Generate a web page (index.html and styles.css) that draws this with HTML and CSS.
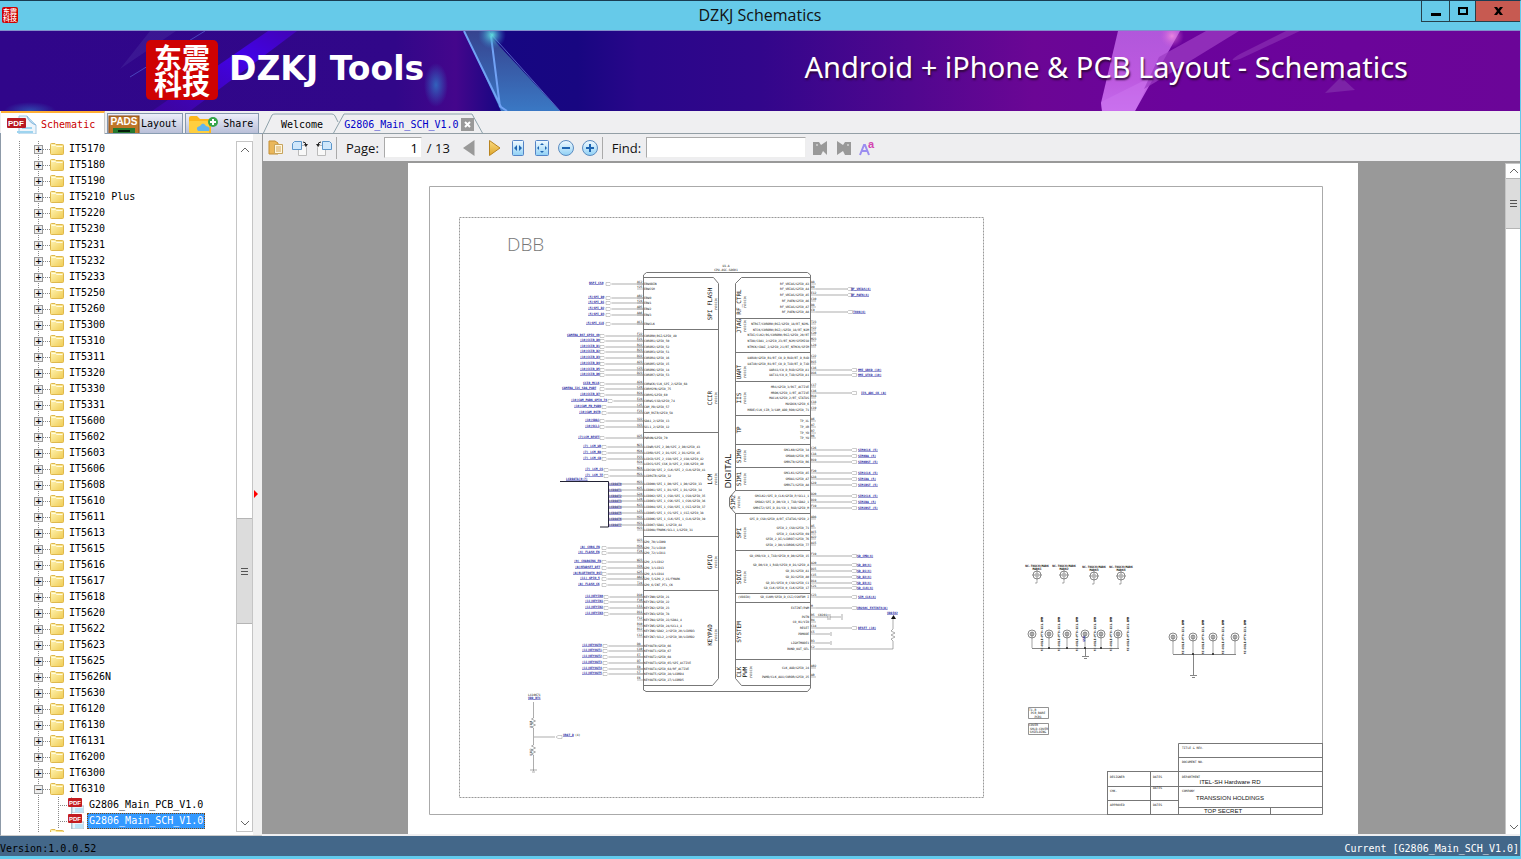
FILE: index.html
```html
<!DOCTYPE html>
<html lang="en">
<head>
<meta charset="utf-8">
<title>DZKJ Schematics</title>
<link rel="stylesheet" href="styles.css">
</head>
<body>
<svg class="defs" aria-hidden="true">
  <defs>
    <linearGradient id="folderFill" x1="0" y1="0" x2="1" y2="1"><stop offset="0" stop-color="#fff6b8"/><stop offset="1" stop-color="#f0cb52"/></linearGradient>
    <linearGradient id="blueFill" x1="0" y1="0" x2="0" y2="1"><stop offset="0" stop-color="#f2faff"/><stop offset="1" stop-color="#8fd0f5"/></linearGradient>
    <linearGradient id="goldFill" x1="0" y1="0" x2="0" y2="1"><stop offset="0" stop-color="#fbdc82"/><stop offset="1" stop-color="#dea52a"/></linearGradient>
    <symbol id="folder" viewBox="0 0 14 12"><path d="M.5 10.500V1.500q0-1 1-1H5l1 1h6.500q1 0 1 1v8q0 1-1 1h-11q-1 0-1-1z" fill="url(#folderFill)" stroke="#dfb84c"/><path d="M1.500 2.500h4l1 1h6" fill="none" stroke="#fffbe0"/></symbol>
    <symbol id="pdf" viewBox="0 0 16 16"><path d="M3.500 0v16M4 9h12v7H4z" fill="#e9f4fb" stroke="#a9bfca"/><path d="M7 12h8M7 14h8" stroke="#8ed3f3"/><rect x="0" y="1" width="14" height="9" rx="1" fill="#c31c20"/><text x="7" y="8" text-anchor="middle" class="badge-small">PDF</text></symbol>
  </defs>
</svg>

<div class="window">
  <header class="titlebar">
    <span class="app-icon"><span>东震</span><span>科技</span></span>
    <h1>DZKJ Schematics</h1>
    <div class="window-buttons">
      <button class="wb min" aria-label="Minimize"><svg width="12" height="10"><path d="M1 7h10v3H1z"/></svg></button>
      <button class="wb max" aria-label="Maximize"><svg width="10" height="8"><path d="M0 0h10v8H0zM2 2v4h6V2z" fill-rule="evenodd"/></svg></button>
      <button class="wb close" aria-label="Close"><svg width="9" height="8"><path d="M0 0h3l1.500 2L6 0h3L6 4l3 4H6L4.500 6 3 8H0l3-4z"/></svg></button>
    </div>
  </header>

  <section class="banner">
    <svg class="banner-art" viewBox="0 0 1520 80" preserveAspectRatio="none" aria-hidden="true">
      <defs>
        <linearGradient id="sky" x1="0" x2="1" y1="0" y2="0">
          <stop offset="0" stop-color="#30068a"/><stop offset=".26" stop-color="#310789"/><stop offset=".3" stop-color="#44068c"/><stop offset=".33" stop-color="#160682"/><stop offset=".38" stop-color="#180681"/><stop offset=".42" stop-color="#29068a"/><stop offset=".5" stop-color="#32068b"/><stop offset=".6" stop-color="#51078f"/><stop offset=".68" stop-color="#6b0695"/><stop offset=".78" stop-color="#6b039c"/><stop offset="1" stop-color="#6b0598"/>
        </linearGradient>
        <linearGradient id="shard" x1="0" x2="0" y1="0" y2="1"><stop offset="0" stop-color="#36438f"/><stop offset="1" stop-color="#3a78c4"/></linearGradient>
        <linearGradient id="pink" x1="0" x2="0" y1="0" y2="1"><stop offset="0" stop-color="#b157db"/><stop offset=".6" stop-color="#bd5ae0"/><stop offset="1" stop-color="#c66bed"/></linearGradient>
        <linearGradient id="beam" x1="1" x2="0" y1="0" y2="1"><stop offset="0" stop-color="#4203b4"/><stop offset=".35" stop-color="#4202e8"/><stop offset="1" stop-color="#4203a8" stop-opacity=".7"/></linearGradient>
        <radialGradient id="glow"><stop offset="0" stop-color="#2f78c8"/><stop offset="1" stop-color="#2f78c8" stop-opacity="0"/></radialGradient>
        <radialGradient id="spark"><stop offset="0" stop-color="#61e0df"/><stop offset="1" stop-color="#2f78c8" stop-opacity="0"/></radialGradient>
        <radialGradient id="rose"><stop offset="0" stop-color="#ff9be0"/><stop offset="1" stop-color="#d35ad8" stop-opacity="0"/></radialGradient>
      </defs>
      <rect width="1520" height="80" fill="url(#sky)"/>
      <path d="M268 0h29L190 80h-38z" fill="url(#beam)"/>
      <path d="M150 0h26L120 38zM205 0L128 50" fill="#4b2fa0" opacity=".4"/>
      <path d="M205 0l-75 46" stroke="#4a45bd"/>
      <ellipse cx="30" cy="80" rx="26" ry="9" fill="url(#glow)" opacity=".6"/>
      <ellipse cx="436" cy="54" rx="12" ry="22" fill="url(#glow)" opacity=".8"/>
      <path d="M464 0h26l1 6 69 74h-59z" fill="url(#shard)"/>
      <path d="M464 0l37 76 6 4M491 5l9 71" fill="none" stroke="#71a2f5" stroke-width="2"/>
      <path d="M490 2l70 78" fill="none" stroke="#5566c4"/>
      <circle cx="492" cy="4" r="14" fill="url(#spark)"/>
      <path d="M1118 0h62l-45 80h-33l-1-8z" fill="url(#pink)"/>
      <path d="M1101 71l50-25-16 34h-33z" fill="#ce78f0" opacity=".45"/>
      <path d="M1206 0h33l-75 46-20 12 15-32z" fill="#9c3cc3" opacity=".75"/>
      <path d="M1286 0h14l-60 28q-15 4 0-5z" fill="#8d35b5" opacity=".6"/>
      <path d="M1325 62l16-16 14 13z" fill="#8330ad" opacity=".7"/>
      <circle cx="1172" cy="5" r="12" fill="url(#rose)" opacity=".7"/>
    </svg>
    <div class="brand">
      <div class="seal"><span>东震</span><span>科技</span></div>
      <strong>DZKJ Tools</strong>
    </div>
    <p class="tagline">Android + iPhone &amp; PCB Layout - Schematics</p>
  </section>

  <main class="workspace">
    <aside class="sidebar">
      <nav class="side-tabs">
        <button class="side-tab active"><svg width="33" height="20" viewBox="0 0 33 20"><path d="M14 2h8l9 9v9H14z" fill="#eef5fb" stroke="#9fc8e4"/><path d="M22 2q2 7 9 9" fill="#b9dcf2" stroke="#88b8dc"/><path d="M17 14h10M12 18h16" stroke="#9ed4ef" stroke-width="2"/><rect x="2" y="4" width="19" height="10" rx="1" fill="#b91922"/><text x="11" y="12" text-anchor="middle" class="badge-large">PDF</text></svg>Schematic</button>
        <button class="side-tab"><svg width="32" height="18" viewBox="0 0 32 18"><rect x="1" y="1" width="30" height="18" fill="#bf7629" stroke="#8c4c14"/><text x="16" y="10" text-anchor="middle" class="pads">PADS</text><path d="M5 18v-5h22v5z" fill="#26792f"/><path d="M10 16h12" stroke="#061c0b" stroke-width="2"/></svg>Layout</button>
        <button class="side-tab share"><svg width="32" height="18" viewBox="0 0 32 18"><path d="M3 3q0-2 2-2h6l3 3h9q2 0 2 2v12H5q-2 0-2-2z" fill="#fdb71b"/><path d="M3 16V7q0-1 1-1h16q3 0 3 3v9H5q-2 0-2-2z" fill="#ffcf3f"/><path d="M12 16q-3-4 2-5 3-5 6 0 5 1 3 5z" fill="#62b5ec"/><circle cx="27" cy="7" r="5" fill="#35a44a"/><path d="M24 7h6M27 4v6" stroke="#fff" stroke-width="2"/></svg>Share</button>
      </nav>
      <div class="side-body">
        <div class="tree-wrap">
          <ul class="tree">
            <li><button class="tg">+</button><svg><use href="#folder"/></svg>IT5170</li>
            <li><button class="tg">+</button><svg><use href="#folder"/></svg>IT5180</li>
            <li><button class="tg">+</button><svg><use href="#folder"/></svg>IT5190</li>
            <li><button class="tg">+</button><svg><use href="#folder"/></svg>IT5210 Plus</li>
            <li><button class="tg">+</button><svg><use href="#folder"/></svg>IT5220</li>
            <li><button class="tg">+</button><svg><use href="#folder"/></svg>IT5230</li>
            <li><button class="tg">+</button><svg><use href="#folder"/></svg>IT5231</li>
            <li><button class="tg">+</button><svg><use href="#folder"/></svg>IT5232</li>
            <li><button class="tg">+</button><svg><use href="#folder"/></svg>IT5233</li>
            <li><button class="tg">+</button><svg><use href="#folder"/></svg>IT5250</li>
            <li><button class="tg">+</button><svg><use href="#folder"/></svg>IT5260</li>
            <li><button class="tg">+</button><svg><use href="#folder"/></svg>IT5300</li>
            <li><button class="tg">+</button><svg><use href="#folder"/></svg>IT5310</li>
            <li><button class="tg">+</button><svg><use href="#folder"/></svg>IT5311</li>
            <li><button class="tg">+</button><svg><use href="#folder"/></svg>IT5320</li>
            <li><button class="tg">+</button><svg><use href="#folder"/></svg>IT5330</li>
            <li><button class="tg">+</button><svg><use href="#folder"/></svg>IT5331</li>
            <li><button class="tg">+</button><svg><use href="#folder"/></svg>IT5600</li>
            <li><button class="tg">+</button><svg><use href="#folder"/></svg>IT5602</li>
            <li><button class="tg">+</button><svg><use href="#folder"/></svg>IT5603</li>
            <li><button class="tg">+</button><svg><use href="#folder"/></svg>IT5606</li>
            <li><button class="tg">+</button><svg><use href="#folder"/></svg>IT5608</li>
            <li><button class="tg">+</button><svg><use href="#folder"/></svg>IT5610</li>
            <li><button class="tg">+</button><svg><use href="#folder"/></svg>IT5611</li>
            <li><button class="tg">+</button><svg><use href="#folder"/></svg>IT5613</li>
            <li><button class="tg">+</button><svg><use href="#folder"/></svg>IT5615</li>
            <li><button class="tg">+</button><svg><use href="#folder"/></svg>IT5616</li>
            <li><button class="tg">+</button><svg><use href="#folder"/></svg>IT5617</li>
            <li><button class="tg">+</button><svg><use href="#folder"/></svg>IT5618</li>
            <li><button class="tg">+</button><svg><use href="#folder"/></svg>IT5620</li>
            <li><button class="tg">+</button><svg><use href="#folder"/></svg>IT5622</li>
            <li><button class="tg">+</button><svg><use href="#folder"/></svg>IT5623</li>
            <li><button class="tg">+</button><svg><use href="#folder"/></svg>IT5625</li>
            <li><button class="tg">+</button><svg><use href="#folder"/></svg>IT5626N</li>
            <li><button class="tg">+</button><svg><use href="#folder"/></svg>IT5630</li>
            <li><button class="tg">+</button><svg><use href="#folder"/></svg>IT6120</li>
            <li><button class="tg">+</button><svg><use href="#folder"/></svg>IT6130</li>
            <li><button class="tg">+</button><svg><use href="#folder"/></svg>IT6131</li>
            <li><button class="tg">+</button><svg><use href="#folder"/></svg>IT6200</li>
            <li><button class="tg">+</button><svg><use href="#folder"/></svg>IT6300</li>
            <li><button class="tg">−</button><svg><use href="#folder"/></svg>IT6310</li>
            <li class="file"><svg><use href="#pdf"/></svg><span>G2806_Main_PCB_V1.0</span></li>
            <li class="file"><svg><use href="#pdf"/></svg><span class="selected">G2806_Main_SCH_V1.0</span></li>
            <li class="next"><svg><use href="#folder"/></svg></li>
          </ul>
        </div>
        <div class="scrollbar side-scroll">
          <button aria-label="Scroll up"><svg width="9" height="6"><path d="M1 5l4-4 4 4"/></svg></button>
          <div class="space before"></div><div class="thumb"></div><div class="space after"></div>
          <button aria-label="Scroll down"><svg width="9" height="6"><path d="M1 1l4 4 4-4"/></svg></button>
        </div>
        <div class="splitter"><svg width="6" height="8"><path d="M1 0l4 4-4 4z" fill="#f00"/></svg></div>
      </div>
    </aside>

    <section class="document">
      <nav class="doc-tabs">
        <svg class="tab-lines" width="222" height="24" aria-hidden="true"><path d="M1 23L10 4q1-1 3-1h57q2 0 3 2l3 6M71 23L82 3h128l11 20" fill="none" stroke="#8ea2ab"/></svg>
        <button class="doc-tab welcome">Welcome</button>
        <button class="doc-tab current">G2806_Main_SCH_V1.0</button>
        <button class="tab-close" aria-label="Close tab"><svg width="7" height="7"><path d="M1 1l5 5M6 1L1 6" stroke="#fff" stroke-width="2"/></svg></button>
      </nav>
      <div class="toolbar">
        <button class="tool" aria-label="Open"><svg width="16" height="16"><path d="M1 1h6l3 2v11H1z" fill="#eab75a" stroke="#c58f35"/><path d="M6.500 4.500h8v9h-8z" fill="#fff7df" stroke="#c7a45d"/><path d="M8 7h5M8 9h5M8 11h5" stroke="#d5a555"/></svg></button>
        <button class="tool" aria-label="Rotate left"><svg width="16" height="16"><path d="M6.500 5.500h6l2 2v8h-8z" fill="#f8f8f8" stroke="#bbb"/><path d="M.5 9.500v-6l2-2h7v8z" fill="#cfe7fb" stroke="#5c96ca"/><path d="M11 2q3 0 3 3" fill="none" stroke="#222"/><path d="M12 4h4l-2 3z" fill="#222"/></svg></button>
        <button class="tool" aria-label="Rotate right"><svg width="16" height="16"><path d="M1.500 15.500v-8l2-2h6v10z" fill="#f8f8f8" stroke="#bbb"/><path d="M6.500 1.500h7l2 2v6h-9z" fill="#cfe7fb" stroke="#5c96ca"/><path d="M5 2q-3 0-3 3" fill="none" stroke="#222"/><path d="M0 4h4L2 7z" fill="#222"/></svg></button>
        <span class="rule"></span>
        <label for="page">Page:</label>
        <input id="page" class="page-input" value="1">
        <span class="page-count">/ 13</span>
        <button class="tool prev" aria-label="Previous page"><svg width="12" height="16"><path d="M11.500 0v16L0 8z" fill="#999"/></svg></button>
        <button class="tool next-page" aria-label="Next page"><svg width="12" height="16"><path d="M.5.500v15L11 8z" fill="url(#goldFill)" stroke="#b98420"/></svg></button>
        <button class="tool" aria-label="Fit width"><svg width="16" height="16"><rect x="2.500" y=".5" width="11" height="15" rx="1" fill="url(#blueFill)" stroke="#5484c6"/><path d="M7 5v6L4 8zM9 5v6l3-3z" fill="#1f65b2"/></svg></button>
        <button class="tool" aria-label="Fit page"><svg width="16" height="16"><rect x="1.500" y=".5" width="13" height="15" rx="1" fill="url(#blueFill)" stroke="#5484c6"/><path d="M6 5l2-2 2 2zM6 11l2 2 2-2zM5 6L3 8l2 2zM11 6l2 2-2 2z" fill="#1f65b2"/></svg></button>
        <button class="tool" aria-label="Zoom out"><svg width="16" height="16"><circle cx="8" cy="8" r="7.500" fill="url(#blueFill)" stroke="#5c8cc0"/><path d="M4 8h8" stroke="#1f65b2" stroke-width="2"/></svg></button>
        <button class="tool" aria-label="Zoom in"><svg width="16" height="16"><circle cx="8" cy="8" r="7.500" fill="url(#blueFill)" stroke="#5c8cc0"/><path d="M4 8h8M8 4v8" stroke="#1f65b2" stroke-width="2"/></svg></button>
        <span class="rule tight"></span>
        <label for="find">Find:</label>
        <input id="find" class="find-input">
        <button class="tool find-prev" aria-label="Find previous"><svg width="16" height="16"><path d="M1 2h6l2 3 6-4v14l-4-4-2 4H1z" fill="#999"/><path d="M4 5h2" stroke="#eee"/></svg></button>
        <button class="tool" aria-label="Find next"><svg width="16" height="16"><path d="M1 1l6 4 2-3h6v13H9l-2-4-6 4z" fill="#999"/><path d="M11 5h2" stroke="#eee"/></svg></button>
        <button class="tool match" aria-label="Match case"><svg width="16" height="16"><path d="M1 15L5 5h1l4 10M3 11h6" fill="none" stroke="#9b8df0" stroke-width="2"/><text x="12" y="8" text-anchor="middle" class="small-a">a</text></svg></button>
      </div>
      <div class="viewer">
        <div class="canvas">
          <svg id="sheet" class="sheet" viewBox="408 163 950 671" preserveAspectRatio="xMidYMin slice" role="img" aria-label="Baseband schematic sheet"></svg>
        </div>
        <div class="scrollbar view-scroll">
          <button aria-label="Scroll up"><svg width="9" height="6"><path d="M1 5l4-4 4 4"/></svg></button>
          <div class="thumb"></div><div class="space after"></div>
          <button aria-label="Scroll down"><svg width="9" height="6"><path d="M1 1l4 4 4-4"/></svg></button>
        </div>
      </div>
    </section>
  </main>

  <footer class="status"><span>Version:1.0.0.52</span><span class="current-file">Current [G2806_Main_SCH_V1.0]</span></footer>
</div>
<script src="schematic.js"></script>
</body>
</html>
```
FILE: styles.css
```css
* { box-sizing: border-box; }
body { margin: 0; background: #66cae9; font-family: "Open Sans", "Noto Sans", sans-serif; font-size: 13px; color: #111; }
button { border: 0; padding: 0; margin: 0; background: none; font: inherit; color: inherit; }
svg { display: block; flex: none; }
.defs { position: absolute; width: 0; height: 0; }
.window { height: 100vh; display: flex; flex-direction: column; border-top: 1px solid #193c52; border-right: 1px solid #62cbed; border-bottom: 3px solid #62cbed; overflow: hidden; }

.titlebar { height: 30px; flex: none; display: grid; grid-template-columns: 1fr auto 1fr; background: #66cae9; border-bottom: 1px solid #8090cb; }
.titlebar h1 { margin: 0; font-size: 16px; line-height: 28px; font-weight: 400; }
.app-icon, .seal { display: flex; flex-direction: column; justify-content: center; align-items: center; background: #cf0202; color: #fff; font-family: "Noto Sans CJK SC", sans-serif; font-weight: 500; }
.app-icon { width: 16px; height: 16px; margin: 6px 2px; border-radius: 2px; font-size: 7px; line-height: 7px; }
.window-buttons { display: flex; justify-self: end; height: 21px; }
.wb { display: flex; align-items: center; justify-content: center; width: 28px; border: 1px solid #263f4a; border-top: 0; border-right: 0; }
.wb.max { width: 26px; }
.wb.close { width: 45px; background: #c75a51; }

.banner { position: relative; height: 80px; flex: none; display: flex; justify-content: space-between; color: #fff; }
.banner-art { position: absolute; inset: 0; width: 100%; height: 100%; }
.brand { position: relative; display: flex; align-items: flex-start; gap: 11px; padding: 9px 0 0 146px; }
.brand strong { font-size: 33px; line-height: 58px; font-weight: 700; font-family: "DejaVu Sans", sans-serif; white-space: nowrap; }
.seal { width: 72px; height: 60px; border-radius: 5px; font-size: 28px; line-height: 26px; font-weight: 700; }
.tagline { position: relative; margin: 0 112px 0 0; font-family: "Noto Sans", sans-serif; font-size: 29px; line-height: 72px; text-shadow: 1px 2px 2px #30083c; white-space: nowrap; }

.workspace { flex: 1; min-height: 0; display: flex; background: #efeff1; }
.sidebar { width: 262px; flex: none; display: flex; flex-direction: column; font-family: "DejaVu Sans Mono", monospace; font-size: 10px; color: #000; }
.side-tabs { display: flex; align-items: flex-end; gap: 2px; height: 23px; padding-left: 1px; border-bottom: 1px solid #899db2; flex: none; }
.side-tab { display: flex; align-items: center; gap: 1px; height: 20px; padding: 0 5px 0 0; border: 1px solid #8598ad; border-bottom: 0; background: linear-gradient(#edeffa, #b9bfd8); }
.side-tab.share { gap: 5px; }
.side-tab.active { height: 23px; width: 104px; margin-bottom: -1px; padding: 1px 0 0 4px; background: #fff; border: 0; border-top: 2px solid #ffae33; border-right: 1px solid #ccc; color: #c90000; }
.side-tab.active svg { margin-right: 2px; }
.badge-small { font: 700 6px "Liberation Sans", sans-serif; fill: #fff; }
.badge-large { font: 700 8px "Liberation Sans", sans-serif; fill: #fff; }
.pads { font: 700 10px "Liberation Sans", sans-serif; fill: #fff; }

.side-body { flex: 1; min-height: 0; display: flex; background: #fff; border-left: 1px solid #8d9aa8; border-bottom: 1px solid #ccc; }
.tree-wrap { flex: 1; min-width: 0; margin: 7px 0 3px; overflow: hidden; }
.tree { margin: 0; padding: 0; list-style: none; background: repeating-linear-gradient(#888 0 1px, #fff 1px 2px) 18px 0 / 1px 100% no-repeat, repeating-linear-gradient(#888 0 1px, #fff 1px 2px) 37px 0 / 1px 100% no-repeat; }
.tree li { display: flex; align-items: center; height: 16px; padding-left: 33px; line-height: 16px; white-space: nowrap; }
.tree li > svg { width: 14px; height: 12px; margin-right: 5px; }
.tg { width: 9px; height: 9px; border: 1px solid #999; background: #eee; line-height: 7px; margin-right: 7px; position: relative; display: flex; align-items: center; justify-content: center; }
.tg::after { content: ""; position: absolute; left: 8px; top: 3px; width: 7px; border-top: 1px dotted #888; }
.tree .file { padding-left: 57px; }
.tree .file::before { content: ""; width: 10px; height: 16px; flex: none; background: repeating-linear-gradient(#888 0 1px, #fff 1px 2px) 0 0 / 1px 100% no-repeat, repeating-linear-gradient(90deg, #888 0 1px, #fff 1px 2px) 0 8px / 100% 1px no-repeat; }
.tree .file svg { width: 16px; height: 16px; margin-right: 3px; }
.tree .file span { padding: 0 1px; line-height: 14px; border: 1px solid transparent; }
.tree .file .selected { background: #3399ff; color: #fff; border: 1px dotted #7b4a12; }
.tree .next { padding-left: 49px; align-items: flex-start; }

.scrollbar { display: flex; flex-direction: column; width: 17px; flex: none; background: #fff; border: 1px solid #c5c5c5; }
.scrollbar button { height: 16px; flex: none; display: flex; align-items: center; justify-content: center; }
.scrollbar button path { fill: none; stroke: #666; stroke-width: 1; }
.thumb { display: flex; background: linear-gradient(#555, #555) 50% calc(50% - 3px) / 7px 1px no-repeat, linear-gradient(#555, #555) 50% 50% / 7px 1px no-repeat, linear-gradient(#555, #555) 50% calc(50% + 3px) / 7px 1px no-repeat, #dcdcdc; border: solid #b5b5b5; border-width: 1px 0; }
.side-scroll { margin: 7px 0 3px; }
.side-scroll .before { flex: 362; }
.side-scroll .thumb { flex: 104; }
.side-scroll .after { flex: 192; }
.splitter { width: 9px; flex: none; display: flex; align-items: center; background: #f0f0f0; padding-top: 19px; }

.document { flex: 1; min-width: 0; display: flex; flex-direction: column; }
.doc-tabs { position: relative; height: 23px; flex: none; display: flex; align-items: center; padding-left: 19px; border-bottom: 1px solid #939fa6; font-family: "DejaVu Sans Mono", monospace; font-size: 10px; color: #000; }
.tab-lines { position: absolute; left: 0; top: 0; }
.doc-tab { position: relative; height: 22px; margin-top: 4px; }
.doc-tab.current { margin-left: 21px; color: #0000c8; }
.tab-close { position: relative; width: 13px; height: 13px; margin: 4px 0 0 2px; background: #999; display: flex; align-items: center; justify-content: center; }
.toolbar { height: 27px; flex: none; display: flex; align-items: center; padding-left: 5px; gap: 8px; background: #eeeef0; border-left: 1px solid #999; }
.tool { width: 16px; height: 16px; flex: none; display: flex; align-items: center; justify-content: center; }
.tool.match { margin-left: -1px; }
.prev { margin-left: 3px; }
.next-page { margin: 0 -1px 0 2px; }
.rule { width: 1px; height: 22px; margin: 0 1px 0 -4px; background: #aaa; }
.rule.tight { margin: 0 1px 0 -4px; }
.toolbar input { height: 21px; margin: 0; border: 1px solid #aaa; border-right-color: #eee; border-bottom-color: #eee; background: #fff; font: inherit; padding: 0 3px; }
.toolbar .page-input { width: 38px; text-align: right; margin-left: -3px; }
.page-count { margin-left: -3px; }
.toolbar .find-input { width: 160px; margin-left: -3px; }
.find-prev { margin-left: -2px; }
.small-a { font: 700 11px "Liberation Sans", sans-serif; fill: #d344b0; }
.tool.match svg { overflow: visible; }
.viewer { flex: 1; min-height: 0; display: flex; background: #999; border-top: 2px solid #999; border-bottom: 2px solid #efeff1; }
.canvas { flex: 1; min-width: 0; display: flex; justify-content: center; overflow: hidden; padding-right: 1px; }
.sheet { width: 950px; height: 100%; background: #fff; }
.view-scroll { width: 15px; border-width: 1px 0 0 1px; }
.view-scroll button { height: 14px; }
.view-scroll .thumb { flex: 49; }
.view-scroll .after { flex: 592; }

.status { height: 20px; flex: none; display: flex; justify-content: space-between; background: #436789; font-family: "DejaVu Sans Mono", monospace; font-size: 10px; line-height: 26px; color: #000; overflow: hidden; }
.current-file { color: #fff; padding-right: 1px; }

.sheet text { font-family: "DejaVu Sans Mono", monospace; font-size: 3px; fill: #111; }
.sheet .net { fill: #1c1ca0; font-weight: 700; }
.sheet .strong { font-weight: 700; }
.sheet .group { font-size: 6px; }
.sheet .chip { font-family: "Liberation Sans", sans-serif; font-size: 9px; }
.sheet .title { font-family: "Open Sans", sans-serif; font-weight: 300; font-size: 19px; fill: #777; }
.sheet .block { font-family: "Liberation Sans", sans-serif; font-size: 6px; }
```
FILE: schematic.js
```js
const sheet = document.getElementById("sheet");
const NS = "http://www.w3.org/2000/svg";

function add(tag, attrs, text) {
  const el = document.createElementNS(NS, tag);
  for (const key in attrs) el.setAttribute(key, attrs[key]);
  if (text) el.textContent = text;
  sheet.append(el);
}
function path(d, stroke = "#777", width = 1) {
  add("path", { d, stroke, "stroke-width": width, fill: "none" });
}
function label(x, y, text, cls = "", anchor = "start") {
  add("text", { x, y, class: cls, "text-anchor": anchor }, text);
}
function upright(x, y, text, cls) {
  add("text", { transform: `translate(${x} ${y}) rotate(-90)`, class: cls, "text-anchor": "middle" }, text);
}
function net(x, y, text) {
  label(x, y, text, "net");
  path(`M${x} ${y + 0.5}h${text.length * 1.8}`, "#5555b8", 0.6);
}

// Sheet frame and section outline
path("M429.500 186.500h893v628h-893z", "#aaa");
add("path", { d: "M459.500 217.500h524v580h-524z", fill: "none", stroke: "#999", "stroke-dasharray": "2 1" });
label(507, 251, "DBB", "title");

// Chip outline
label(726, 267, "U1-A", "", "middle");
label(726, 271, "CPU-ASC-S8601", "", "middle");
path("M643.500 690V275l3-2.500h161l3 2.500v413l-3 3.500H646l-3-2");
path("M643.500 277.500h70l5 6v395l-6 7h-69");
path("M810.500 277.500h-69l-6 6v207l-6 7v9l6 7v165l6 7h69");
[329, 432, 536, 590].forEach(y => path(`M643 ${y}.5h75`));
[318, 352, 381, 415, 444, 467, 490, 513, 550, 593, 602, 659].forEach(y => path(`M735 ${y}.5h75`));
upright(731, 471, "DIGITAL", "chip");

[[712, 304, "SPI FLASH"], [712, 398, "CCIR"], [712, 479, "LCM"], [712, 562, "GPIO"], [712, 635, "KEYPAD"],
 [741, 302, "RF_CTRL"], [741, 326, "JTAG"], [741, 372, "UART"], [741, 398, "IIS"], [741, 430, "TP"],
 [741, 456, "SIM0"], [741, 479, "SIM1"], [735, 502, "SIM2"], [741, 533, "SPI"], [741, 577, "SDIO"],
 [741, 632, "SYSTEM"], [741, 672, "CLK"], [747, 672, "PWM"]].forEach(([x, y, t]) => {
  upright(x, y, t, "group");
  if (t !== "TP" && t !== "SYSTEM" && t !== "CLK") upright(x + 5, y, "(VDDIO)", "");
});

// Left pins: y, pin number, pin name, net name, net x, port x
const left = [
  [284, "AC2", "EBWODIN", "NSPI_CS0", 589, 606], [289, "Y25", "EBWCSH"],
  [298, "AB2", "EBWO", "(5)SPI_D0", 588, 606], [303, "Y24", "EBW1", "(5)SPI_D1", 588, 606],
  [309, "AD5", "EBW2", "(5)SPI_D2", 588, 606], [315, "AA6", "EBW3", "(5)SPI_D3", 588, 606],
  [324, "AC3", "EBWCLK", "(5)SPI_CLK", 586, 606],
  [336, "F22", "CORDR0(BSI/GPIO_49", "CAMERA_RST_GPIO_49", 567, 600], [341, "E21", "CORDR1/GPIO_50", "(10)CCIR_D0", 580, 600],
  [347, "B22", "CORDR2/GPIO_52", "(10)CCIR_D1", 580, 600], [352, "B23", "CORDR3/GPIO_51", "(10)CCIR_D2", 580, 600],
  [358, "D22", "CORDR4/GPIO_16", "(10)CCIR_D3", 580, 600], [364, "A23", "CORDR5/GPIO_15", "(10)CCIR_D4", 580, 600],
  [370, "C23", "CORDR6/GPIO_14", "(10)CCIR_D5", 580, 600], [375, "D23", "CORDR7/GPIO_53", "(10)CCIR_D6", 580, 600],
  [384, "A24", "CORWCK/CLK_SPI_2/GPIO_68", "CCIR_MCLK", 583, 600], [389, "C24", "CORHSYN/GPIO_75", "CAMERA_I2C_SDA_PWDT", 562, 600],
  [395, "B24", "CORHS/GPIO_60", "(10)CCIR_D7", 580, 600], [401, "E24", "CORWS/CSD/GPIO_74", "(10)CAM_PWDN_GPIO_74", 571, 608],
  [407, "C25", "CAM_PD/GPIO_57", "(10)CAM_PD_PWDN", 574, 602], [413, "F23", "CAM_RSTB/GPIO_58", "(10)CAM_RSTB", 579, 602],
  [421, "V22", "SDA1_2/GPIO_13", "(10)SDA1", 585, 600], [427, "V23", "SCL1_2/GPIO_12", "(10)SCL1", 585, 600],
  [438, "U25", "PWRON/GPIO_70", "(7)LCM_RESET", 578, 600],
  [447, "N23", "LCDWR/SPI_2_D0/SPI_2_D0/GPIO_43", "(7) LCM_WR", 583, 602], [453, "M24", "LCDRD/SPI_2_D1/SPI_2_D1/GPIO_45", "(7) LCM_RD", 583, 602],
  [459, "P23", "LCDCD/SPI_2_CSO/SPI_2_CSO/GPIO_42", "(7) LCM_CD", 583, 602], [464, "R24", "LCDCS/SPI_CSK_D/SPI_2_CSK/GPIO_40"],
  [470, "N24", "LCDCS0/SPI_2_CLK/SPI_2_CLK/GPIO_41", "(7) LCM_CS", 585, 604], [476, "M21", "LCDRSTB/GPIO_32", "(7) LCM_TE", 585, 604],
  [484, "M23", "LCDD00/SPI_1_D0/SPI_1_D0/GPIO_33"], [490, "K25", "LCDD01/SPI_1_D1/SPI_1_D1/GPIO_34"],
  [496, "G24", "LCDD02/SPI_1_CSO/SPI_1_CSO/GPIO_35"], [501, "L24", "LCDD03/SPI_1_CSK/SPI_1_CSK/GPIO_36"],
  [507, "K23", "LCDD04/SPI_1_CSO/SPI_1_CSI/GPIO_37"], [513, "L23", "LCDD05/SPI_1_CS/SPI_1_CSI/GPIO_38"],
  [519, "H22", "LCDD06/SPI_1_CLK/SPI_1_CLK/GPIO_39"], [525, "H21", "LCDD07/SDA1_1/GPIO_44"], [530, "H23", "LCDD08/FMARK/SCL1_1/GPIO_31"],
  [542, "U23", "GPO_70/LCD09"], [548, "H24", "GPO_71/LCD10", "(8) CHRG_EN", 580, 602], [553, "F24", "GPO_72/LCD11", "(4) FLASH_EN", 578, 602],
  [562, "W23", "GPO_2/LCD12", "(9) CHARGING_EN", 574, 602], [568, "V24", "GPO_3/LCD13", "(8)HEADSET_DET", 575, 602],
  [574, "G25", "GPO_4/LCD14", "(8)BLUETOOTH_RST", 573, 602], [579, "AA23", "GPO_5/GPO_2_CS/FMARK", "(11) GPIO_5", 580, 602],
  [585, "T24", "GPO_6/INT_PTL_CK", "(8) FLASH_CK", 578, 602],
  [597, "D10", "KEYIN0/GPIO_21", "(11)KEYIN0", 585, 604], [602, "F10", "KEYIN1/GPIO_22", "(11)KEYIN1", 585, 604],
  [608, "C11", "KEYIN2/GPIO_23", "(11)KEYIN2", 585, 604], [614, "D11", "KEYIN3/GPIO_78", "(11)KEYIN3", 585, 604],
  [620, "F12", "KEYIN4/GPIO_22/SDA1_4"], [626, "B10", "KEYIN5/GPIO_24/SCL1_4"], [631, "B12", "KEYIN6/SDA2_2/SPIO_20/LCDRD3"], [637, "C12", "KEYIN7/SCL2_2/SPIO_30/LCDRD2"],
  [646, "D8", "KEYOUT0/GPIO_66", "(11)KEYOUT0", 582, 603], [651, "C10", "KEYOUT1/GPIO_67", "(11)KEYOUT1", 582, 603],
  [657, "E7", "KEYOUT2/GPIO_68", "(11)KEYOUT2", 582, 603], [663, "D7", "KEYOUT3/GPIO_65/SPI_ACTIVE", "(11)KEYOUT3", 582, 603],
  [669, "E8", "KEYOUT4/GPIO_64/RF_ACTIVE", "(11)KEYOUT4", 582, 603], [674, "C7", "KEYOUT5/GPIO_28/LCDRD4", "(11)KEYOUT5", 582, 603], [680, "E6", "KEYOUT6/GPIO_27/LCDRD5"]
];
left.forEach(([y, pin, name, sig, nx, port]) => {
  label(644, y + 1, name);
  label(637, y - 1, pin);
  path(`M637 ${y}h6`, "#777", 0.5);
  if (sig) {
    net(nx, y, sig);
    path(`M${port} ${y - 1.5}h4l1.500 1.500-1.500 1.500h-4z`, "#999", 0.5);
    path(`M${port + 6} ${y}H643`, "#777", 0.6);
  }
});

// LCM data bus
path("M560 481.500h48.500V527H600", "#223", 1);
net(566, 480, "LCDDATA[0:7]");
[484, 490, 496, 501, 507, 513, 519, 525].forEach((y, i) => {
  net(609, y + 1, "LCDDAT" + i);
  path(`M609 ${y}H643`, "#777", 0.6);
});

// Right pins: y, pin number, pin name, net name, net x
const right = [
  [284, "A8", "RF_VBIAS/GPIO_A3"], [289, "D9", "RF_VBIAS/GPIO_A4", "RF_VBIAS(4)", 851], [295, "E12", "RF_VBIAS/GPIO_A5", "RF_PAEN(4)", 851],
  [301, "C10", "RF_PAEN/GPIO_A6"], [307, "D8", "RF_VBIAS/GPIO_A7"], [312, "C9", "RF_PAEN/GPIO_A8", "TXON(4)", 853],
  [324, "T23", "NTRST/CORDR0(BSI/GPIO_18/BT_N2ML"], [330, "Y22", "NTCK/CORDR0(BSI)/GPIO_18/BT_N2M"], [335, "C20", "NTDI/CLK2/BS/CORDR0/BSI/GPIO_20/BT"],
  [341, "M23", "NTDO/CDA1_2/GPIO_23/BT_N2M/SPIMISO"], [347, "L24", "NTMCK/CDAI_2/GPIO_21/BT_NTMCK/SPIM"],
  [358, "C22", "UARX0/GPIO_B1/BT_CO_D_RXD/BT_D_RXD"], [364, "B15", "UATX0/GPIO_B1/BT_CO_D_TXD/BT_D_TXD"],
  [370, "C16", "UARX1/CO_D_RXD/GPIO_A1", "MMI_URXD (10)", 858], [375, "D16", "UATX1/CO_D_TXD/GPIO_A1", "MMI_UTXD (10)", 858],
  [387, "C17", "MRX/GPIO_3/BCT_ACTIVE"], [393, "C16", "MRDK/GPIO_1/BT_ACTIVE", "IIS_ADC_CK (8)", 861], [398, "B18", "MUCLK/GPIO_2/BT_STATUS"],
  [404, "C18", "MUSDCK/GPIO_6"], [410, "C19", "MBDE/CLK_CIR_3/CAM_ADD_RD0/GPIO_71"],
  [421, "A6", "TP_XL"], [427, "A7", "TP_XR"], [433, "B7", "TP_YD"], [438, "B6", "TP_YU"],
  [450, "C26", "SMCLK0/GPIO_34", "SIM0CLK (5)", 858], [456, "C18", "SMDA0/GPIO_B5", "SIM0DA (5)", 858], [462, "B19", "SMRST0/GPIO_B6", "SIM0RST (5)", 858],
  [473, "F20", "SMCLK1/GPIO_A5", "SIM1CLK (5)", 858], [479, "G18", "SMDA1/GPIO_A7", "SIM1DA (5)", 858], [485, "G19", "SMRST1/GPIO_A8", "SIM1RST (5)", 858],
  [496, "D20", "SMCLK2/SPI_D_CLK/GPIO_P/SCL1_1", "SIM2CLK (5)", 858], [502, "D19", "SMDA2/SPI_D_D0/CO_1_TXD/SDA2_1", "SIM2DA (5)", 858], [508, "F19", "SMRST2/SPI_D_D1/CO_1_RXD/GPIO_M", "SIM2RST (5)", 858],
  [519, "AD8", "SPI_D_CSO/GPIO_8/BT_STATUS/SPIO_2"], [528, "A5", "SPIO_2_CSO/GPIO_71"], [534, "AC5", "SPIO_2_CLK/GPIO_69"],
  [539, "A22", "SPIO_2_DI/LCDRD7/GPIO_76"], [545, "A15", "SPIO_2_DO/LCDRD6/GPIO_77"],
  [556, "F19", "SD_CMD/CO_1_TXD/SPIO_0_D0/GPIO_15", "SD_CMD(4)", 857], [565, "A20", "SD_D0/CO_1_RXD/SPIO_0_D1/GPIO_A", "SD_D0(4)", 857],
  [571, "D15", "SD_D1/GPIO_A1", "SD_D1(4)", 857], [577, "C15", "SD_D2/GPIO_A0", "SD_D2(4)", 857], [583, "D14", "SD_D3/SPIO_0_CSO/GPIO_C1", "SD_D3(4)", 857],
  [588, "C21", "SD_CLK/SPIO_0_CLK/GPIO_17", "SD_CLK(4)", 857], [597, "C23", "SD_CLKM/SPIO_D_CSI/CSKFDM I", "SIM_CLK(4)", 858],
  [608, "M", "EXTINT/PWM", "VBUS0C_EXTINT4(8)", 857], [617, "B5", "PUTN"], [622, "B4", "CO_01/VIO"],
  [628, "C14", "RESET", "RESET (10)", 858], [634, "C5", "PDMODE"], [643, "B3", "LIGHTMODE1"], [649, "C2", "BOND_OUT_SEL"],
  [668, "AB2", "CLK_AUD/GPIO_24"], [677, "AB", "PWMD/CLK_AUX/CORDR/GPIO_25"]
];
right.forEach(([y, pin, name, sig, nx]) => {
  label(809, y + 1, name, "", "end");
  label(811, y - 1, pin);
  path(`M810 ${y}h6`, "#777", 0.5);
  if (sig) {
    const port = y < 320 ? 847 : 851;
    path(`M816 ${y}H${port}`, "#777", 0.6);
    path(`M${port} ${y}l1.500-1.500h4v3h-4z`, "#999", 0.5);
    net(nx, y + 1, sig);
  }
});
label(738, 598, "(VDDIO)");

// Reset and strap network
path("M816 617h12M828 614v6M830 614v6M830 617h11M842 614v6M816 634h14M831 632v4M816 643h14M831 641v4M816 649h77v-8l-2-2 4-2-4-2 4-2-4-2 2-2V617", "#777", 0.6);
add("path", { d: "M891 619l2.500-4 2.500 4z", fill: "#111" });
net(887, 614, "VDDIO2");
label(818, 616, "C0201");
net(528, 699, "VDD_RTC");
label(528, 696, "LX10671");
path("M533.500 702v16l-2 1 4 2-4 2 4 2-4 2 2 1v17l-2 1 4 2-4 2 4 2-4 2 2 1v16M530 770h7M532 772h3M534 737h21", "#777", 0.6);
path("M556 737l2-1.500h4v3h-4z", "#999", 0.5);
net(563, 736, "VBAT_D");
label(575, 736, "(4)");
upright(532, 724, "R101", "");
upright(532, 752, "R102", "");

// Fiducial marks
[[1037, 575], [1064, 575], [1094, 576], [1121, 576]].forEach(([x, y], i) => {
  label(x, y - 8, "NC-TOUCH(MARK", "strong", "middle");
  label(x, y - 5, "MARK" + (i + 1), "strong", "middle");
  add("circle", { cx: x, cy: y, r: 4, fill: "none", stroke: "#555", "stroke-width": 0.7 });
  add("circle", { cx: x, cy: y, r: 2, fill: "none", stroke: "#888", "stroke-width": 0.5 });
  path(`M${x - 5} ${y}h10M${x} ${y - 5}v13h-2`, "#555", 0.5);
});

// Mounting holes
function hole(x, y, bottom) {
  add("circle", { cx: x, cy: y, r: 4, fill: "none", stroke: "#555", "stroke-width": 0.7 });
  add("circle", { cx: x, cy: y, r: 2, fill: "#ccc", stroke: "#555", "stroke-width": 0.6 });
  path(`M${x} ${y - 2}V${bottom}`, "#666", 0.6);
  upright(x + 11, y, "NC-HOLE-PTH-1X1.0MM", "strong");
}
[1032, 1049, 1067, 1085, 1101, 1118].forEach(x => hole(x, 634, 648));
[1173, 1193, 1213, 1235].forEach(x => hole(x, 637, 654));
path("M1032 648.500h87M1085.500 648v8M1082 656.500h7M1084 658.500h3M1173 654.500h63M1193.500 654v21M1190 675.500h7M1192 677.500h3", "#666", 0.8);
[[1049, 648], [1067, 648], [1085, 648], [1101, 648], [1193, 654], [1213, 654]].forEach(([cx, cy]) => add("circle", { cx, cy, r: 1, fill: "#222" }));
upright(1085, 639, "GND", "net");

// Board stamps
path("M1028.500 707.500h20v11h-20zM1028.500 723.500h20v11h-20z", "#777", 0.8);
label(1029, 711, "T1-B");
label(1038, 714, "PCB_BARE", "", "middle");
label(1038, 718, "PCB1", "", "middle");
label(1029, 726, "COVER");
label(1039, 730, "SHLD-COVER", "", "middle");
label(1038, 733, "SHIELDING", "", "middle");

// Title block
path("M1322.500 743.500h-144v71h144M1178 757.500h144M1107 771.500h215M1107 786.500h215M1107 800.500h71M1178 807.500h144M1107.500 771v43M1150.500 771v43M1270.500 807v7M1107 814.500h215M1322.500 743v71");
label(1182, 749, "TITLE & REV.");
label(1182, 763, "DOCUMENT NO.");
label(1182, 778, "DEPARTMENT");
label(1182, 792, "COMPANY");
label(1110, 778, "DESIGNER");
label(1110, 792, "CHK.");
label(1110, 806, "APPROVED");
[778, 789, 806].forEach(y => label(1153, y, "DATES"));
label(1230, 784, "ITEL-SH Hardware RD", "block", "middle");
label(1230, 800, "TRANSSION HOLDINGS", "block", "middle");
label(1223, 813, "TOP SECRET", "block", "middle");
```
